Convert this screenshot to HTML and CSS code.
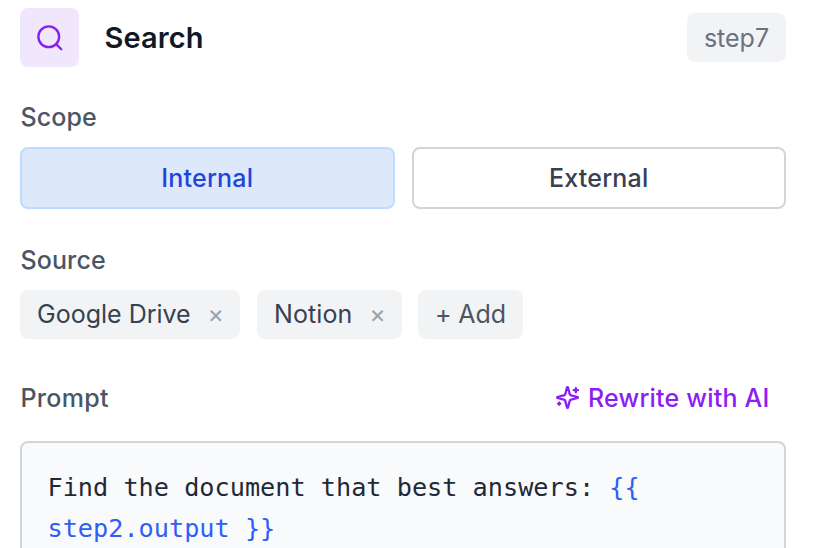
FILE: index.html
```html
<!DOCTYPE html>
<html lang="en">
<head>
<meta charset="utf-8">
<title>Search step</title>
<link rel="stylesheet" href="styles.css">
</head>
<body>
<main class="panel">
  <header class="header">
    <span class="icon-box"><svg width="30" height="30" viewBox="0 0 24 24" fill="none" stroke="currentColor" stroke-width="1.9" stroke-linecap="round" stroke-linejoin="round"><circle cx="11" cy="11" r="8.3"/><path d="m21 21-4.1-4.1"/></svg></span>
    <h1 class="title">Search</h1>
    <span class="step">step7</span>
  </header>
  <section class="scope">
    <h2 class="label">Scope</h2>
    <div class="options">
      <button class="option selected">Internal</button>
      <button class="option">External</button>
    </div>
  </section>
  <section class="source">
    <h2 class="label">Source</h2>
    <div class="chips">
      <span class="chip drive">Google Drive <span class="close">×</span></span>
      <span class="chip notion">Notion <span class="close">×</span></span>
      <span class="chip add">+ Add</span>
    </div>
  </section>
  <section class="prompt">
    <div class="prompt-head">
      <h2 class="label label-prompt">Prompt</h2>
      <span class="rewrite"><svg width="25" height="25" viewBox="0 0 24 24" fill="none" stroke="currentColor" stroke-width="2.2" stroke-linecap="round" stroke-linejoin="round"><path d="M9.937 15.5A2 2 0 0 0 8.5 14.063l-6.135-1.582a.5.5 0 0 1 0-.962L8.5 9.936A2 2 0 0 0 9.937 8.5l1.582-6.135a.5.5 0 0 1 .963 0L14.063 8.5A2 2 0 0 0 15.5 9.937l6.135 1.581a.5.5 0 0 1 0 .964L15.5 14.063a2 2 0 0 0-1.437 1.437l-1.582 6.135a.5.5 0 0 1-.963 0z"/><path d="M20 3v4M22 5h-4M4 17v2M5 18H3"/></svg><span>Rewrite with AI</span></span>
    </div>
    <div class="editor">Find the document that best answers: <span class="var">{{<br>step2.output }}</span></div>
  </section>
</main>
</body>
</html>
```
FILE: styles.css
```css
* { box-sizing: border-box; }
body { margin: 0; background: #fff; overflow: hidden; font-family: Inter, sans-serif; }
.panel { width: 816px; height: 548px; padding: 8px 30px 0 20px; overflow: hidden; }
.header { display: flex; align-items: center; height: 59px; }
.icon-box { display: grid; place-items: center; width: 59px; height: 59px; border-radius: 8px; background: #f0e7fd; color: #8b1ef5; }
.title { margin: 0 0 0 25.5px; font-size: 29px; font-weight: 600; line-height: 40px; letter-spacing: .1px; color: #111827; }
.step { display: grid; place-items: center; width: 99px; height: 49px; margin-left: auto; border-radius: 8px; background: #f2f3f5; color: #6b7280; font-size: 25px; }
.label { margin: 0 0 0 .5px; font-size: 25px; font-weight: 500; line-height: 34px; letter-spacing: .1px; color: #4b5563; }
.label-prompt { letter-spacing: .3px; }
.scope { margin-top: 33px; }
.options { display: grid; grid-template-columns: 1fr 1fr; gap: 17px; margin-top: 12.6px; }
.option { height: 62.4px; padding: 0; border: 2px solid #d1d5db; border-radius: 8px; background: #fff; color: #374151; font: 500 25px Inter, sans-serif; letter-spacing: .2px; }
.option.selected { background: #dee8fb; border-color: #bfdbfe; color: #2045dc; }
.source { margin-top: 34px; }
.chips { display: flex; margin-top: 13px; }
.chip { display: flex; align-items: center; height: 49px; padding: 0 17px; margin-right: 17px; border-radius: 8px; background: #f2f3f5; color: #374151; font-size: 25px; white-space: nowrap; }
.drive { width: 220px; padding-right: 16px; }
.notion { width: 145px; margin-right: 16px; padding-right: 16px; letter-spacing: .1px; }
.add { width: 105px; color: #4b5563; letter-spacing: -.1px; }
.close { margin-left: auto; color: #9ca3af; }
.prompt { margin-top: 42px; }
.prompt-head { display: flex; justify-content: space-between; padding-right: 16.5px; }
.rewrite { display: flex; align-items: center; gap: 8px; color: #8b1ef5; font-size: 25px; font-weight: 500; line-height: 34px; letter-spacing: .2px; }
.editor { height: 160px; margin-top: 26px; padding: 24px 25.5px; border: 2px solid #d1d5db; border-radius: 8px; background: #f9fafc; color: #1f2937; font: 25.22px/41px "DejaVu Sans Mono", monospace; }
.var { color: #2c5ff6; }
```
